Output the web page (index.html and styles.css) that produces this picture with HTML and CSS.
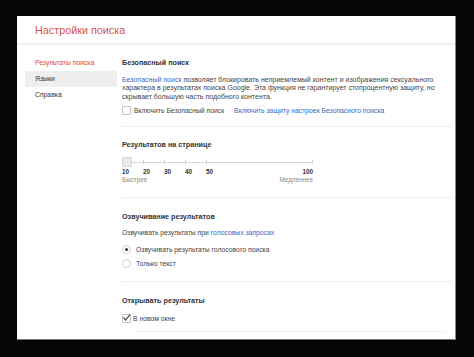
FILE: index.html
```html
<!DOCTYPE html>
<html lang="ru">
<head>
<meta charset="utf-8">
<title>Настройки поиска</title>
<link rel="stylesheet" href="styles.css">
</head>
<body>
<div class="page">
  <div class="header"><span class="title">Настройки поиска</span></div>
  <div class="content">
    <nav class="sidebar">
      <div class="nav-item active">Результаты поиска</div>
      <div class="nav-item hover">Языки</div>
      <div class="nav-item">Справка</div>
    </nav>
    <main class="main">
      <section class="sec sec-safe">
        <h2 class="heading">Безопасный поиск</h2>
        <p class="desc"><a class="link">Безопасный поиск</a> позволяет блокировать неприемлемый контент и изображения сексуального характера в результатах поиска Google. Эта функция не гарантирует стопроцентную защиту, но скрывает большую часть подобного контента.</p>
        <div class="row check-row">
          <span class="checkbox"></span><span class="label">Включить Безопасный поиск</span>
          <a class="link lock-link">Включить защиту настроек Безопасного поиска</a>
        </div>
      </section>
      <section class="sec sec-count">
        <h2 class="heading">Результатов на странице</h2>
        <div class="slider">
          <div class="track"></div>
          <span class="tick t1"></span><span class="tick t2"></span><span class="tick t3"></span><span class="tick t4"></span><span class="tick tend"></span>
          <span class="handle"></span>
        </div>
        <div class="nums">
          <span class="n">10</span><span class="n">20</span><span class="n">30</span><span class="n">40</span><span class="n">50</span><span class="n last">100</span>
        </div>
        <div class="speed"><span>Быстрее</span><span>Медленнее</span></div>
      </section>
      <section class="sec sec-voice">
        <h2 class="heading">Озвучивание результатов</h2>
        <p class="text">Озвучивать результаты при <a class="link">голосовых запросах</a></p>
        <div class="row radio-row first"><span class="radio on"></span><span class="label">Озвучивать результаты голосового поиска</span></div>
        <div class="row radio-row"><span class="radio"></span><span class="label">Только текст</span></div>
      </section>
      <section class="sec sec-open">
        <h2 class="heading">Открывать результаты</h2>
        <div class="row check-row2"><span class="checkbox checked"><svg viewBox="0 0 10 10" width="9" height="9"><path d="M1.5 5.2 L4 7.8 L8.8 1.8" fill="none" stroke="#444" stroke-width="1.3"/></svg></span><span class="label">В новом окне</span></div>
        <div class="foot-line"></div>
      </section>
    </main>
  </div>
</div>
</body>
</html>
```

FILE: styles.css
```css
html, body {
  margin: 0;
  padding: 0;
  background: #060606;
  font-family: "Liberation Sans", Arial, sans-serif;
}
.page {
  margin: 16px 0 0 17px;
  width: 439px;
  height: 324px;
  background: #fff;
  border-bottom: 1px solid #777;
  border-right: 1px solid #888;
  box-sizing: border-box;
  overflow: hidden;
}
.header {
  height: 27px;
  border-bottom: 2px solid #eeeeee;
  display: flex;
  align-items: center;
  padding-left: 18px;
}
.title {
  font-size: 10.8px;
  color: #d9534f;
}
.content {
  display: flex;
}
.sidebar {
  width: 92px;
  margin-left: 8px;
  padding-top: 10px;
}
.nav-item {
  height: 16px;
  line-height: 16px;
  padding-left: 10px;
  font-size: 6.8px;
  color: #333;
}
.nav-item.active { color: #dd4b39; }
.nav-item.hover { background: #eeeeee; }
.main {
  margin-left: 5px;
  flex: 1;
  padding-top: 13px;
  padding-right: 2px;
}
.sec { border-bottom: 1px solid #eeeeee; }
.sec-open { border-bottom: none; }
.heading {
  margin: 0;
  font-size: 7.2px;
  font-weight: bold;
  line-height: 10px;
  color: #333;
}
.desc {
  margin: 8px 0 0;
  font-size: 7px;
  line-height: 8.4px;
  color: #444;
  width: 318px;
}
.link { color: #3b67c8; text-decoration: none; }
.row {
  display: flex;
  align-items: center;
  height: 10px;
  font-size: 6.8px;
  color: #444;
}
.check-row { margin-top: 4px; margin-bottom: 11px; }
.checkbox {
  width: 7px;
  height: 7px;
  border: 1px solid #c4c4c4;
  border-radius: 1px;
  margin-right: 3px;
  position: relative;
  flex: none;
}
.checkbox svg { position: absolute; left: -1px; top: -2px; }
.lock-link { margin-left: 10px; }
.sec-count { padding-top: 13px; }
.slider {
  position: relative;
  height: 10px;
  margin-top: 7px;
  width: 191px;
}
.track {
  position: absolute;
  left: 5px;
  right: 0;
  top: 5px;
  height: 1px;
  background: #d8d8d8;
}
.tick {
  position: absolute;
  top: 3px;
  width: 1px;
  height: 4px;
  background: #d0d0d0;
}
.t1 { left: 21px; }
.t2 { left: 42px; }
.t3 { left: 63px; }
.t4 { left: 84px; }
.tend { left: 190px; }
.handle {
  position: absolute;
  left: 0;
  top: 0;
  width: 8px;
  height: 8px;
  background: #eaeaea;
  border: 1px solid #d6d6d6;
  border-radius: 1px;
}
.nums {
  display: flex;
  width: 191px;
  margin-top: 1px;
  height: 8px;
  font-size: 6.3px;
  line-height: 8px;
  color: #333;
  font-weight: bold;
}
.n { width: 21px; }
.n.last { margin-left: auto; width: auto; }
.speed {
  display: flex;
  justify-content: space-between;
  width: 191px;
  height: 8px;
  font-size: 6.3px;
  line-height: 8px;
  color: #888;
  margin-bottom: 13px;
}
.sec-voice { padding-top: 14px; }
.text {
  margin: 6px 0 0;
  font-size: 6.8px;
  line-height: 10px;
  color: #444;
}
.radio-row.first { margin-top: 6px; }
.radio-row { margin-top: 4px; }
.sec-voice .radio-row:last-child { margin-bottom: 13px; }
.radio {
  width: 7px;
  height: 7px;
  border: 1px solid #cfcfcf;
  border-radius: 50%;
  margin-right: 5px;
  position: relative;
  flex: none;
}
.radio.on::after {
  content: "";
  position: absolute;
  left: 2px;
  top: 2px;
  width: 3px;
  height: 3px;
  border-radius: 50%;
  background: #333;
}
.sec-open { padding-top: 14px; }
.check-row2 { margin-top: 7px; }
.check-row2 .checkbox { margin-right: 2px; }
.foot-line {
  margin-top: 8px;
  height: 1px;
  background: #f2f2f2;
  margin-left: 14px;
  margin-right: 8px;
}
```
